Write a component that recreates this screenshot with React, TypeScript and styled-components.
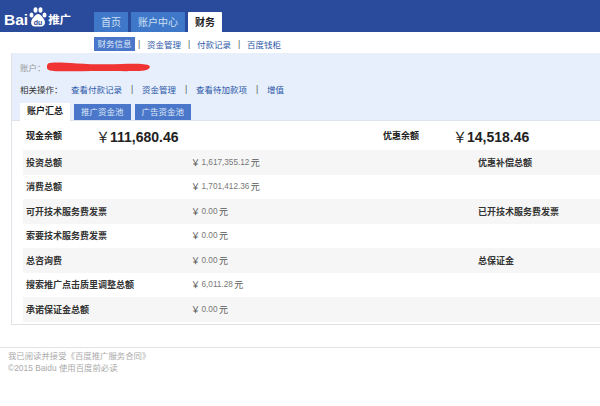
import styled, { createGlobalStyle } from 'styled-components';

const GlobalStyle = createGlobalStyle`
  html, body { margin: 0; padding: 0; background: #fff; }
  body { font-family: "Liberation Sans", "Noto Sans CJK SC", sans-serif; font-size: 9px; overflow: hidden; }
`;

const Page = styled.div`
  width: 600px;
  height: 406px;
  overflow: hidden;
`;

const Header = styled.div`
  height: 32px;
  background: #2a4b9c;
  display: flex;
  align-items: flex-end;
`;

const LogoBox = styled.div`
  width: 94px;
  height: 32px;
  flex: none;
  display: flex;
  align-items: center;
  padding: 0 0 0 4px;
  box-sizing: border-box;
  color: #fff;
`;

const LogoWord = styled.span`
  font-size: 15.5px;
  font-weight: 700;
  line-height: 1;
  margin: 8px 0 0;
`;

const LogoText = styled.span`
  font-size: 11.5px;
  font-weight: 700;
  margin: 5px 0 0;
`;

const Tabs = styled.div`
  display: flex;
  gap: 3px;
`;

const Tab = styled.div<{ $active?: boolean }>`
  height: 20px;
  line-height: 21px;
  padding: 0 7px;
  font-size: 10px;
  border-radius: 1px 1px 0 0;
  background: ${(p) => (p.$active ? '#fff' : '#3f78c8')};
  color: ${(p) => (p.$active ? '#222' : '#cfe0f5')};
  font-weight: ${(p) => (p.$active ? 700 : 400)};
`;

const SubNav = styled.div`
  height: 21px;
  padding: 3px 0 0 94px;
  box-sizing: border-box;
  display: flex;
  align-items: center;
  font-size: 8.5px;
  color: #2b56a8;
`;

const SubActive = styled.span`
  background: #4a77c9;
  color: #dfe8f8;
  padding: 0 3.5px;
  height: 14px;
  line-height: 14px;
  margin-right: -4px;
`;

const Sep = styled.span<{ $gap: number }>`
  width: 2px;
  margin: 0 ${(p) => p.$gap}px;
  color: #555;
  text-align: center;
`;

const Panel = styled.div`
  margin-left: 11px;
  padding-bottom: 2.5px;
  border-left: 1px solid #dfe3ea;
  border-bottom: 1px solid #e2e2e2;
`;

const InfoBox = styled.div`
  background: #e6effb;
  height: 68px;
  padding-left: 8px;
  display: flex;
  flex-direction: column;
  box-sizing: border-box;
  border-bottom: 1px solid #dde4ee;
`;

const AccountRow = styled.div`
  height: 26px;
  padding-top: 1px;
  box-sizing: border-box;
  display: flex;
  align-items: center;
  font-size: 8.5px;
  color: #999;
  position: relative;
`;

const Redact = styled.svg`
  position: absolute;
  left: 27px;
  top: 9px;
`;

const ActionRow = styled.div`
  height: 19px;
  display: flex;
  align-items: center;
  font-size: 8.5px;
  color: #2b56a8;
`;

const ActionLabel = styled.span`
  color: #333;
  margin-right: 8.5px;
`;

const PoolTabs = styled.div`
  display: flex;
  align-items: flex-end;
  gap: 4px;
  flex: 1;
`;

const PoolTab = styled.div<{ $active?: boolean }>`
  height: ${(p) => (p.$active ? 18 : 16)}px;
  line-height: ${(p) => (p.$active ? 17 : 16)}px;
  padding: 0 7px;
  margin-bottom: ${(p) => (p.$active ? -1 : 0)}px;
  background: ${(p) => (p.$active ? '#fff' : '#4a77c9')};
  color: ${(p) => (p.$active ? '#222' : '#dfe8f8')};
  font-weight: ${(p) => (p.$active ? 700 : 400)};
  font-size: ${(p) => (p.$active ? 9 : 8.5)}px;
`;

const Summary = styled.div`
  height: 29px;
  display: grid;
  grid-template-columns: 70px 287px 1fr;
  align-items: center;
  padding-left: 14px;
  font-weight: 700;
  color: #222;
`;

const Amount = styled.span`
  font-size: 14px;
  color: #222;
`;

const Yen = styled.span`
  font-weight: 400;
`;

const Second = styled.div`
  display: grid;
  grid-template-columns: 70px 1fr;
  align-items: center;
`;

const Rows = styled.div`
  padding-left: 11px;
`;

const Row = styled.div<{ $shaded?: boolean }>`
  height: 24.5px;
  display: grid;
  grid-template-columns: 166px 286px 1fr;
  align-items: center;
  padding-left: 3px;
  background: ${(p) => (p.$shaded ? '#f6f6f6' : '#fff')};
`;

const RowLabel = styled.span`
  color: #333;
  font-weight: 700;
`;

const RowValue = styled.span`
  display: flex;
  align-items: center;
  gap: 1.5px;
  margin-left: -1px;
  color: #777;
  font-size: 8.2px;
`;

const ValueUnit = styled.span`
  font-size: 9px;
  color: #555;
`;

const Footer = styled.div`
  margin-top: 22px;
  border-top: 1px solid #e4e4e4;
  padding: 2px 0 0 8px;
  font-size: 8.4px;
  color: #aaa;
  line-height: 12px;
`;

const rows = [
  { label: '投资总额', value: '1,617,355.12', right: '优惠补偿总额' },
  { label: '消费总额', value: '1,701,412.36' },
  { label: '可开技术服务费发票', value: '0.00', right: '已开技术服务费发票' },
  { label: '索要技术服务费发票', value: '0.00' },
  { label: '总咨询费', value: '0.00', right: '总保证金' },
  { label: '搜索推广点击质里调整总额', value: '6,011.28' },
  { label: '承诺保证金总额', value: '0.00' },
];

const App = () => (
  <Page>
    <GlobalStyle />
    <Header>
      <LogoBox>
        <LogoWord>Bai</LogoWord>
        <svg width="20" height="24" viewBox="0 0 20 24">
          <ellipse cx="3.500" cy="11" rx="2" ry="2.600" fill="#fff" />
          <ellipse cx="7.500" cy="6" rx="2" ry="2.800" fill="#fff" />
          <ellipse cx="12.500" cy="6" rx="2" ry="2.800" fill="#fff" />
          <ellipse cx="16.500" cy="11" rx="2" ry="2.600" fill="#fff" />
          <path d="M10 10c-2.500 0-3.500 2.500-5 4S2.500 18 3.500 20.500s3.500 2 6.500 2 5 .5 6.500-2-.5-5-1.500-6.500-2.500-4-5-4z" fill="#fff" />
          <text x="10" y="20.500" textAnchor="middle" fontSize="7" fontWeight="700" fill="#2a4b9c">du</text>
        </svg>
        <LogoText>推广</LogoText>
      </LogoBox>
      <Tabs>
        <Tab>首页</Tab>
        <Tab>账户中心</Tab>
        <Tab $active>财务</Tab>
      </Tabs>
    </Header>
    <SubNav>
      <SubActive>财务信息</SubActive>
      <Sep $gap={7}>|</Sep>
      <span>资金管理</span>
      <Sep $gap={7}>|</Sep>
      <span>付款记录</span>
      <Sep $gap={7}>|</Sep>
      <span>百度钱柜</span>
    </SubNav>
    <Panel>
      <InfoBox>
        <AccountRow>
          账户：
          <Redact width="103" height="10" viewBox="0 0 103 10">
            <path d="M1 1.500C6 0 14 .5 30 1.500S60 2.500 75 2s25 0 27 1.500 .5 4-5 5-27 .5-45 .5S8 10 3 8.500 0 3 1 1.500z" fill="#f03434" />
          </Redact>
        </AccountRow>
        <ActionRow>
          <ActionLabel>相关操作：</ActionLabel>
          <span>查看付款记录</span>
          <Sep $gap={9}>|</Sep>
          <span>资金管理</span>
          <Sep $gap={9}>|</Sep>
          <span>查看待加款项</span>
          <Sep $gap={9}>|</Sep>
          <span>增值</span>
        </ActionRow>
        <PoolTabs>
          <PoolTab $active>账户汇总</PoolTab>
          <PoolTab>推广资金池</PoolTab>
          <PoolTab>广告资金池</PoolTab>
        </PoolTabs>
      </InfoBox>
      <Summary>
        <span>现金余额</span>
        <Amount><Yen>￥</Yen>111,680.46</Amount>
        <Second>
          <span>优惠余额</span>
          <Amount><Yen>￥</Yen>14,518.46</Amount>
        </Second>
      </Summary>
      <Rows>
        {rows.map((row, i) => (
          <Row key={row.label} $shaded={i % 2 === 0}>
            <RowLabel>{row.label}</RowLabel>
            <RowValue>
              <ValueUnit>￥</ValueUnit>
              {row.value}
              <ValueUnit>元</ValueUnit>
            </RowValue>
            {row.right && <RowLabel>{row.right}</RowLabel>}
          </Row>
        ))}
      </Rows>
    </Panel>
    <Footer>
      <div>我已阅读并接受《百度推广服务合同》</div>
      <div>©2015 Baidu 使用百度前必读</div>
    </Footer>
  </Page>
);

export default App;
